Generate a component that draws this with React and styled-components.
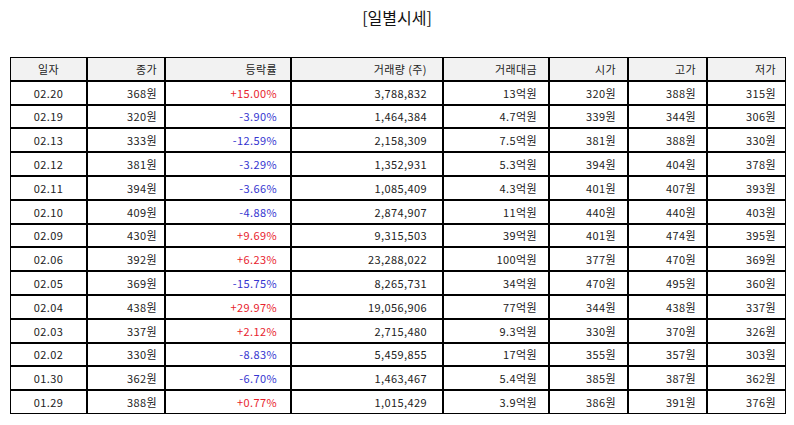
import React from "react";
import styled, { createGlobalStyle } from "styled-components";

const Global = createGlobalStyle`
  html, body { margin: 0; padding: 0; background: #fff; }
  body { font-family: "Noto Sans CJK KR", "Noto Sans", sans-serif; color: #222; }
`;

const Page = styled.div`
  width: 794px;
  padding: 5px 10px 0 10px;
  box-sizing: border-box;
`;

const Title = styled.h1`
  margin: 0;
  height: 24px;
  line-height: 24px;
  font-size: 16px;
  font-weight: 400;
  text-align: center;
  color: #111;
`;

const Table = styled.table`
  margin-top: 28px;
  width: 776px;
  border-collapse: separate;
  border-spacing: 0;
  table-layout: fixed;
  font-size: 11px;
  letter-spacing: 0.4px;
`;

const Th = styled.th`
  height: 23.8px;
  box-sizing: border-box;
  border: 1px solid #000;
  background: #f2f2f2;
  font-weight: 400;
  color: #222;
  padding: 0 ${(p) => p.$pr}px 0 0;
  text-align: ${(p) => (p.$center ? "center" : "right")};
  ${(p) => p.$center && "padding: 0;"}
`;

const Td = styled.td`
  height: 23.8px;
  box-sizing: border-box;
  border: 1px solid #000;
  padding: 0 ${(p) => p.$pr}px 0 0;
  text-align: ${(p) => (p.$center ? "center" : "right")};
  ${(p) => p.$center && "padding: 0;"}
  color: ${(p) => p.$color || "#222"};
  white-space: nowrap;
`;

const cols = [
  { label: "일자", w: 77, center: true, pr: 0 },
  { label: "종가", w: 78, pr: 7 },
  { label: "등락률", w: 126, pr: 13 },
  { label: "거래량 (주)", w: 152, pr: 15 },
  { label: "거래대금", w: 106, pr: 11 },
  { label: "시가", w: 79, pr: 11 },
  { label: "고가", w: 79, pr: 10 },
  { label: "저가", w: 79, pr: 9 },
];

const rows = [
  ["02.20", "368원", "+15.00%", "3,788,832", "13억원", "320원", "388원", "315원"],
  ["02.19", "320원", "-3.90%", "1,464,384", "4.7억원", "339원", "344원", "306원"],
  ["02.13", "333원", "-12.59%", "2,158,309", "7.5억원", "381원", "388원", "330원"],
  ["02.12", "381원", "-3.29%", "1,352,931", "5.3억원", "394원", "404원", "378원"],
  ["02.11", "394원", "-3.66%", "1,085,409", "4.3억원", "401원", "407원", "393원"],
  ["02.10", "409원", "-4.88%", "2,874,907", "11억원", "440원", "440원", "403원"],
  ["02.09", "430원", "+9.69%", "9,315,503", "39억원", "401원", "474원", "395원"],
  ["02.06", "392원", "+6.23%", "23,288,022", "100억원", "377원", "470원", "369원"],
  ["02.05", "369원", "-15.75%", "8,265,731", "34억원", "470원", "495원", "360원"],
  ["02.04", "438원", "+29.97%", "19,056,906", "77억원", "344원", "438원", "337원"],
  ["02.03", "337원", "+2.12%", "2,715,480", "9.3억원", "330원", "370원", "326원"],
  ["02.02", "330원", "-8.83%", "5,459,855", "17억원", "355원", "357원", "303원"],
  ["01.30", "362원", "-6.70%", "1,463,467", "5.4억원", "385원", "387원", "362원"],
  ["01.29", "388원", "+0.77%", "1,015,429", "3.9억원", "386원", "391원", "376원"],
];

const rateColor = (v) => (v.startsWith("+") ? "#e8232e" : "#3535d0");

export default function App() {
  return (
    <Page>
      <Global />
      <Title>[일별시세]</Title>
      <Table>
        <colgroup>
          {cols.map((c) => (
            <col key={c.label} style={{ width: c.w }} />
          ))}
        </colgroup>
        <thead>
          <tr>
            {cols.map((c) => (
              <Th key={c.label} $center={c.center} $pr={c.pr}>
                {c.label}
              </Th>
            ))}
          </tr>
        </thead>
        <tbody>
          {rows.map((r) => (
            <tr key={r[0]}>
              {r.map((v, i) => (
                <Td
                  key={i}
                  $center={cols[i].center}
                  $pr={cols[i].pr}
                  $color={i === 2 ? rateColor(v) : undefined}
                >
                  {v}
                </Td>
              ))}
            </tr>
          ))}
        </tbody>
      </Table>
    </Page>
  );
}
